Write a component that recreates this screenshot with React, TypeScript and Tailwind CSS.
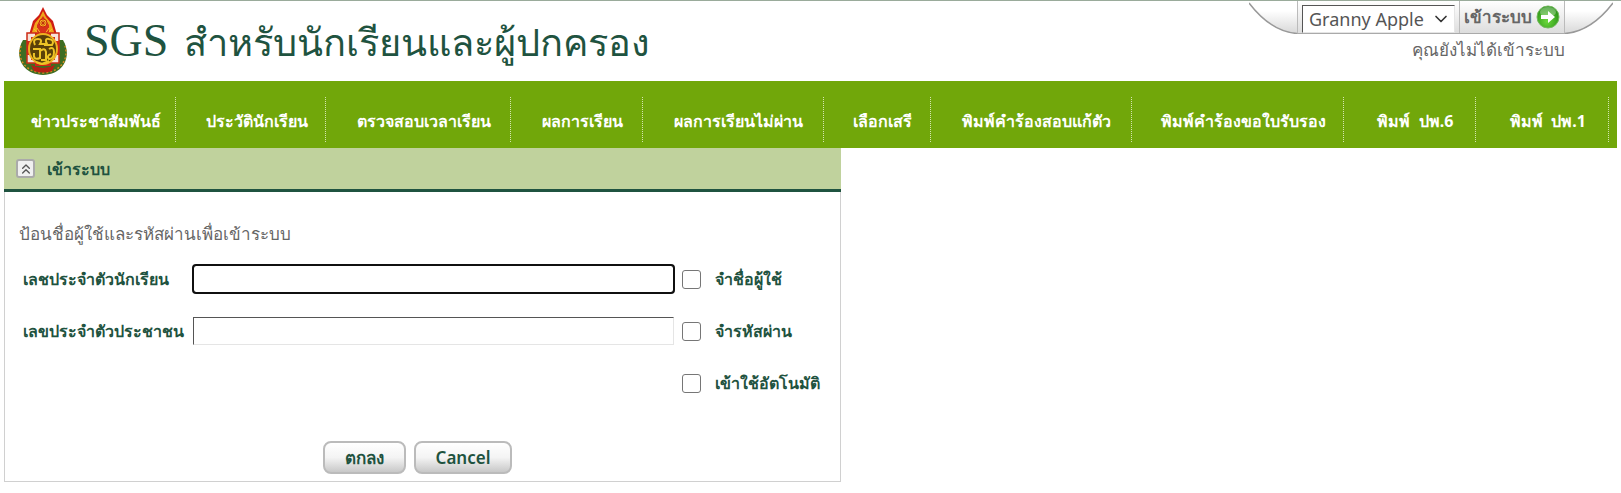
import { ChevronDown, ChevronsUp } from 'lucide-react';

const menuItems = [
  'ข่าวประชาสัมพันธ์',
  'ประวัตินักเรียน',
  'ตรวจสอบเวลาเรียน',
  'ผลการเรียน',
  'ผลการเรียนไม่ผ่าน',
  'เลือกเสรี',
  'พิมพ์คำร้องสอบแก้ตัว',
  'พิมพ์คำร้องขอใบรับรอง',
  'พิมพ์  ปพ.6',
  'พิมพ์  ปพ.1',
];

const App = () => {
  return (
    <div className="border-t border-[#9aab9b] bg-white px-1 font-['Noto_Sans',sans-serif] text-[#666]">
      <Header />
      <MainMenu />
      <LoginPanel />
    </div>
  );
};

export default App;

const Header = () => {
  return (
    <header className="flex h-20 items-start justify-between">
      <div className="flex h-20 items-center pl-3.5">
        <Emblem />
        <h1 className="ml-4 flex items-baseline gap-4 whitespace-nowrap text-[#1f5340]">
          <span className="font-['Liberation_Serif',serif] text-[46px] leading-none">SGS</span>
          <span className="text-[38px] leading-none font-light">สำหรับนักเรียนและผู้ปกครอง</span>
        </h1>
      </div>
      <TopTools />
    </header>
  );
};

const TopTools = () => {
  return (
    <div className="flex flex-col pr-1">
      <div className="flex h-[33px] items-stretch">
        <Curve />
        <div className="flex border-b border-[#aaa] bg-linear-to-b from-white to-[#ddd]">
          <div className="relative mr-1 border-l border-[#bbb] pl-1">
            <select
              aria-label="Theme"
              className="mt-1 h-7 w-[153px] appearance-none border border-[#e5e5e5] border-t-[#555] border-l-[#555] bg-white pl-1.5 text-lg leading-[26px] text-[#555]"
            >
              <option>Granny Apple</option>
            </select>
            <ChevronDown className="pointer-events-none absolute top-2 right-1 size-5 text-[#333]" />
          </div>
          <a href="#login" className="flex items-center border-x border-[#bbb] pl-1 text-[17px] font-bold whitespace-nowrap text-[#666]">
            เข้าระบบ
            <GoIcon />
          </a>
        </div>
        <Curve flip />
      </div>
      <p className="pr-12 text-right text-[17px] leading-8">คุณยังไม่ได้เข้าระบบ</p>
    </div>
  );
};

const MainMenu = () => {
  return (
    <nav className="bg-[#71a70a] pt-4 pr-2 pb-1.5">
      <ul className="grid grid-cols-[172fr_150fr_185fr_132fr_180fr_107fr_201fr_212fr_132fr_133fr]">
        {menuItems.map((item) => (
          <li key={item} className="flex h-[45px] items-center justify-center border-r border-dotted border-[#d5e5b0] pt-0.5 pl-3">
            <a href="#menu" className="text-base font-bold whitespace-pre text-white">{item}</a>
          </li>
        ))}
      </ul>
    </nav>
  );
};

const labelStyle = 'text-base font-bold whitespace-nowrap text-[#1f5340]';
const checkStyle = 'ml-1 size-[19px] appearance-none rounded-[3px] border border-[#767676] bg-white';
const buttonStyle =
  'h-[33px] rounded-lg border-2 border-[#bbb] bg-linear-to-b from-white via-[#f4f4f4] to-[#c8c8c8] px-5 text-[17px] leading-none font-semibold text-[#1f5340]';

const LoginPanel = () => {
  return (
    <section className="max-w-[837px]">
      <div className="flex h-11 items-center gap-3 border-b-3 border-[#1f5340] bg-[#c0d29d] pl-3">
        <button
          aria-label="Collapse"
          className="flex size-[19px] items-center justify-center rounded-[3px] border-2 border-[#aaa] bg-[#f0f0f0] text-[#555]"
        >
          <ChevronsUp className="size-4 shrink-0" />
        </button>
        <h2 className={labelStyle}>เข้าระบบ</h2>
      </div>
      <form className="border border-t-0 border-[#d0d0d0] pt-7 pr-4 pb-[7px] pl-3.5">
        <p className="text-[17px] leading-7">ป้อนชื่อผู้ใช้และรหัสผ่านเพื่อเข้าระบบ</p>
        <div className="mt-[5px] grid grid-cols-[166px_1fr_33px_109px] items-center gap-x-1 pl-1 [grid-auto-rows:52px]">
          <label htmlFor="student" className={labelStyle}>เลชประจำตัวนักเรียน</label>
          <input id="student" type="text" className="h-7 rounded-[3px] border border-[#777] outline-2 -outline-offset-1 outline-[#101010]" />
          <input id="keep-name" type="checkbox" className={checkStyle} />
          <label htmlFor="keep-name" className={labelStyle}>จำชื่อผู้ใช้</label>

          <label htmlFor="citizen" className={labelStyle}>เลขประจำตัวประชาชน</label>
          <input id="citizen" type="password" className="h-7 border border-[#e5e5e5] border-t-[#555] border-l-[#555]" />
          <input id="keep-pass" type="checkbox" className={checkStyle} />
          <label htmlFor="keep-pass" className={labelStyle}>จำรหัสผ่าน</label>

          <input id="auto" type="checkbox" className={`${checkStyle} col-start-3`} />
          <label htmlFor="auto" className={labelStyle}>เข้าใช้อัตโนมัติ</label>
        </div>
        <div className="mt-8 flex justify-center gap-2 pr-2">
          <button type="submit" className={buttonStyle}>ตกลง</button>
          <button type="button" className={buttonStyle}>Cancel</button>
        </div>
      </form>
    </section>
  );
};

const Emblem = () => (
  <svg viewBox="0 0 50 68" className="h-[68px] w-[50px]" aria-hidden="true">
    <path d="M5 33C-4 48 3 67 25 68 47 67 54 48 45 33Z" fill="#3e6d22" />
    <path d="M3 39C-1 52 7 65 25 66 43 65 51 52 47 39" fill="none" stroke="#d58b21" strokeWidth="1.5" strokeDasharray="2 2" />
    <path d="M25 0 29 8 35 14 39 28 11 28 15 14 21 8Z" fill="#cf1c13" />
    <path d="M25 4 28 10 33 16 37 28 13 28 17 16 22 10Z" fill="#f0a51c" />
    <path d="M25 9 31 18 31 26 19 26 19 18Z" fill="#d8321a" />
    <circle cx="25" cy="16" r="4" fill="#f8bd25" stroke="#c8240e" strokeWidth="1" />
    <path d="M25 13V19M22 16H28M23 14 27 18M27 14 23 18" stroke="#b61c0c" strokeWidth=".7" />
    <path d="M16 22 20 26M34 22 30 26M19 21 23 27M31 21 27 27" stroke="#f5c52a" strokeWidth="1" />
    <path d="M9 26H41V56H9Z" fill="#f6e3d9" stroke="#cd2b16" strokeWidth="1.5" />
    <path d="M9 34H13V30H17V26H33V30H37V34H41V48H37V53H33V59H17V53H13V48H9Z" fill="#ce2517" />
    <path d="M13 58Q25 64 37 58L34 64Q25 67 16 64Z" fill="#b42015" />
    <ellipse cx="25" cy="42" rx="14" ry="15" fill="#5a4008" stroke="#eeb321" strokeWidth="2" />
    <path
      d="M17 38Q14 32 20 32 25 32 22 37H29Q26 31 31 32 37 33 34 38H26M15 42H22V51Q15 54 16 46M22 44Q27 40 28 45V53H23M31 42Q36 39 36 45 36 52 31 52 28 49 33 47M18 55 24 57 31 54"
      fill="none"
      stroke="#eec426"
      strokeWidth="2"
    />
  </svg>
);

const Curve = ({ flip }: { flip?: boolean }) => (
  <svg viewBox="0 0 48 33" className={flip ? 'h-[33px] w-12 -scale-x-100' : 'h-[33px] w-12'} aria-hidden="true">
    <defs>
      <linearGradient id="curve" x1="0" y1="0" x2="0" y2="1">
        <stop offset="0.3" stopColor="#fff" />
        <stop offset="1" stopColor="#d8d8d8" />
      </linearGradient>
    </defs>
    <path d="M0 2C13 19 28 31 48 32.5V0H0Z" fill="url(#curve)" />
    <path d="M0 2C13 19 28 31 48 32.5" fill="none" stroke="#999" strokeWidth="1.5" />
  </svg>
);

const GoIcon = () => (
  <svg viewBox="0 0 24 24" className="mx-1 size-6" aria-hidden="true">
    <defs>
      <radialGradient id="go" cx=".45" cy=".7" r=".7">
        <stop offset="0" stopColor="#6bd83b" />
        <stop offset="1" stopColor="#238b14" />
      </radialGradient>
    </defs>
    <circle cx="12" cy="12" r="11" fill="url(#go)" stroke="#75b95f" />
    <ellipse cx="12" cy="7" rx="8" ry="5" fill="#fff" opacity=".3" />
    <path d="M5 10H12V6L19 12 12 18V14H5Z" fill="#fff" />
  </svg>
);
